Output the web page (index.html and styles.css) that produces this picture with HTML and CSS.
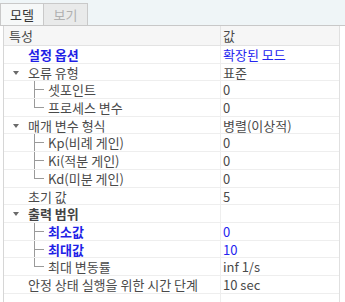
FILE: index.html
```html
<!DOCTYPE html>
<html>
<head>
<meta charset="utf-8">
<link rel="stylesheet" href="styles.css">
</head>
<body>
<div class="tabs">
  <div class="tab active">모델</div>
  <div class="tab disabled">보기</div>
</div>
<div class="grid">
  <div class="row head"><div class="c1">특성</div><div class="c2">값</div></div>
  <div class="row"><div class="c1 l0 blue">설정 옵션</div><div class="c2 blue">확장된 모드</div></div>
  <div class="row"><div class="c1 l0"><span class="arrow"></span>오류 유형</div><div class="c2">표준</div></div>
  <div class="row"><div class="c1 l1 mid">셋포인트</div><div class="c2">0</div></div>
  <div class="row"><div class="c1 l1 last">프로세스 변수</div><div class="c2">0</div></div>
  <div class="row"><div class="c1 l0"><span class="arrow"></span>매개 변수 형식</div><div class="c2">병렬(이상적)</div></div>
  <div class="row"><div class="c1 l1 mid">Kp(비례 게인)</div><div class="c2">0</div></div>
  <div class="row"><div class="c1 l1 mid">Ki(적분 게인)</div><div class="c2">0</div></div>
  <div class="row"><div class="c1 l1 last">Kd(미분 게인)</div><div class="c2">0</div></div>
  <div class="row"><div class="c1 l0">초기 값</div><div class="c2">5</div></div>
  <div class="row"><div class="c1 l0 strong"><span class="arrow"></span>출력 범위</div><div class="c2"></div></div>
  <div class="row"><div class="c1 l1 mid blue">최소값</div><div class="c2 blue">0</div></div>
  <div class="row"><div class="c1 l1 mid blue">최대값</div><div class="c2 blue">10</div></div>
  <div class="row"><div class="c1 l1 last">최대 변동률</div><div class="c2">inf 1/s</div></div>
  <div class="row"><div class="c1 l0">안정 상태 실행을 위한 시간 단계</div><div class="c2">10 sec</div></div>
  <div class="filler"><div class="c1"></div><div class="c2"></div></div>
</div>
</body>
</html>
```
FILE: styles.css
```css
html, body {
  margin: 0;
  padding: 0;
  height: 302px;
  background: #ffffff;
  font-family: "Noto Sans CJK KR", "Noto Sans", sans-serif;
  font-size: 13px;
  color: #4a4a4a;
  overflow: hidden;
}
.tabs {
  height: 22px;
  padding-top: 3px;
  background: #eff5f7;
  border-bottom: 1px solid #c8c8c8;
  display: flex;
}
.tab {
  width: 44px;
  height: 22px;
  box-sizing: border-box;
  border: 1px solid #c9c9c9;
  border-bottom: none;
  display: flex;
  align-items: center;
  justify-content: center;
  font-size: 13px;
  line-height: 1;
}
.tab.active {
  background: #f6f8f8;
  color: #333;
}
.tab.disabled {
  background: #e9eaea;
  color: #b0b0b0;
  border-left: none;
  width: 44px;
}
.grid {
  margin-left: 3px;
  width: 337px;
  box-sizing: border-box;
  border-left: 1px solid #d6d6d6;
  border-right: 1px solid #e0e0e0;
}
.row {
  display: grid;
  grid-template-columns: 217px 1fr;
  height: 17.7px;
  box-sizing: border-box;
  border-bottom: 1px solid #eeeeee;
  line-height: 17px;
  white-space: nowrap;
}
.row.head {
  height: 20px;
  background: #f6f6f6;
  border-bottom: 1px solid #e3e3e3;
  line-height: 19px;
  color: #4a4a4a;
}
.head .c1 { padding-left: 5px; }
.c1 {
  position: relative;
  border-right: 1px solid #eeeeee;
  overflow: hidden;
}
.head .c1 { border-right-color: #e3e3e3; }
.c2 {
  padding-left: 2px;
  overflow: hidden;
}
.l0 { padding-left: 24px; }
.l1 { padding-left: 44px; }
.strong { font-weight: bold; color: #444; }
.blue {
  color: #1f1fe6;
  font-weight: bold;
}
.c2.blue { font-weight: normal; color: #2424f0; }
.arrow {
  position: absolute;
  left: 9px;
  top: 7px;
  width: 0;
  height: 0;
  border-left: 3px solid transparent;
  border-right: 3px solid transparent;
  border-top: 4px solid #6a6a6a;
}
.l1::before {
  content: "";
  position: absolute;
  left: 30px;
  top: -1px;
  bottom: -1px;
  border-left: 1px solid #9a9a9a;
}
.l1.last::before { bottom: 8px; }
.l1::after {
  content: "";
  position: absolute;
  left: 30px;
  top: 8px;
  width: 10px;
  border-top: 1px solid #9a9a9a;
}
.filler {
  display: grid;
  grid-template-columns: 217px 1fr;
  height: 10px;
}
.filler .c1 { border-right: 1px solid #eeeeee; }
```
